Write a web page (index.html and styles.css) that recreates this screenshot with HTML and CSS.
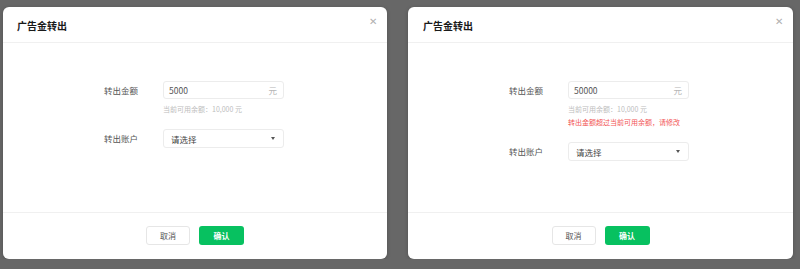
FILE: index.html
```html
<!DOCTYPE html>
<html>
    <head>
        <title>广告金转出</title>
        <link rel="stylesheet" href="styles.css">
    </head>

    <body>

        <div class="stage">

            <div class="dialog">
                <div class="dialog_header">
                    <span class="dialog_title">广告金转出</span>
                    <span class="dialog_close">&#x2715;</span>
                </div>

                <div class="dialog_body">
                    <div class="form_row">
                        <label class="form_label">转出金额</label>
                        <div class="form_field">
                            <div class="amount_input">
                                <span class="amount_value">5000</span>
                                <span class="amount_unit">元</span>
                            </div>
                            <div class="form_hint">当前可用余额：10,000 元</div>
                        </div>
                    </div>

                    <div class="form_row">
                        <label class="form_label">转出账户</label>
                        <div class="form_field">
                            <div class="account_select">
                                <span>请选择</span>
                                <span class="select_arrow"></span>
                            </div>
                        </div>
                    </div>
                </div>

                <div class="dialog_footer">
                    <button type="button" class="btn btn_cancel">取消</button>
                    <button type="button" class="btn btn_confirm">确认</button>
                </div>
            </div>

            <div class="dialog">
                <div class="dialog_header">
                    <span class="dialog_title">广告金转出</span>
                    <span class="dialog_close">&#x2715;</span>
                </div>

                <div class="dialog_body">
                    <div class="form_row">
                        <label class="form_label">转出金额</label>
                        <div class="form_field">
                            <div class="amount_input">
                                <span class="amount_value">50000</span>
                                <span class="amount_unit">元</span>
                            </div>
                            <div class="form_hint">当前可用余额：10,000 元</div>
                            <div class="form_error">转出金额超过当前可用余额，请修改</div>
                        </div>
                    </div>

                    <div class="form_row">
                        <label class="form_label">转出账户</label>
                        <div class="form_field">
                            <div class="account_select">
                                <span>请选择</span>
                                <span class="select_arrow"></span>
                            </div>
                        </div>
                    </div>
                </div>

                <div class="dialog_footer">
                    <button type="button" class="btn btn_cancel">取消</button>
                    <button type="button" class="btn btn_confirm">确认</button>
                </div>
            </div>

        </div>

    </body>
</html>
```

FILE: styles.css
```css
body {
    margin: 0;
    background-color: #676767;
    font-family: "Noto Sans CJK SC", "Noto Sans", sans-serif;
    color: #333;
}

.stage {
    display: flex;
    gap: 21px;
    padding: 7px 7px 0 3px;
}

.dialog {
    width: 384px;
    height: 252px;
    background-color: #fff;
    border-radius: 6px;
    box-shadow: 0 1px 4px rgba(0, 0, 0, 0.2);
    display: flex;
    flex-direction: column;
}

.dialog + .dialog {
    width: 385px;
}

.dialog_header {
    height: 36px;
    border-bottom: 1px solid #f0f0f0;
    display: flex;
    align-items: center;
    justify-content: space-between;
    padding: 0 10px 0 14px;
    box-sizing: border-box;
}

.dialog + .dialog .dialog_header {
    padding-left: 15px;
}

.dialog_title {
    font-size: 10px;
    font-weight: bold;
    color: #1a1a1a;
    margin-top: 1px;
}

.dialog_close {
    font-size: 10px;
    line-height: 10px;
    color: #b0b0b0;
    align-self: flex-start;
    margin-top: 9px;
}

.dialog_body {
    flex: 1;
    padding: 38px 0 0 75px;
    box-sizing: border-box;
}

.form_row {
    display: grid;
    grid-template-columns: 60px 121px;
    column-gap: 25px;
    margin-bottom: 13px;
}

.form_label {
    font-size: 8.5px;
    color: #555;
    text-align: right;
    line-height: 18px;
}

.amount_input, .account_select {
    height: 18px;
    border: 1px solid #ececec;
    border-radius: 3px;
    box-sizing: border-box;
    display: flex;
    align-items: center;
    justify-content: space-between;
    padding: 0 6px 0 5px;
    font-size: 8.5px;
}

.amount_value {
    color: #555;
}

.amount_unit {
    color: #b5b5b5;
}

.account_select {
    height: 19px;
    padding-left: 7px;
    color: #444;
}

.select_arrow {
    width: 0;
    height: 0;
    border-left: 2.5px solid transparent;
    border-right: 2.5px solid transparent;
    border-top: 3px solid #555;
    margin-right: 2px;
}

.form_hint, .form_error {
    font-size: 7px;
    line-height: 13px;
}

.form_hint {
    color: #bdbdbd;
    margin-top: 4px;
}

.form_error {
    color: #f25555;
}

.dialog_footer {
    height: 47px;
    border-top: 1px solid #f0f0f0;
    display: flex;
    justify-content: center;
    align-items: flex-start;
    gap: 9px;
    padding-top: 13px;
    box-sizing: border-box;
}

.btn {
    width: 44px;
    height: 19px;
    border-radius: 3px;
    font-family: "Noto Sans CJK SC", "Noto Sans", sans-serif;
    font-size: 8px;
    padding: 0;
    cursor: pointer;
}

.btn_cancel {
    background-color: #fff;
    border: 1px solid #e6e6e6;
    color: #555;
}

.btn_confirm {
    width: 45px;
    background-color: #07c160;
    border: none;
    color: #fff;
    font-weight: bold;
}
```
